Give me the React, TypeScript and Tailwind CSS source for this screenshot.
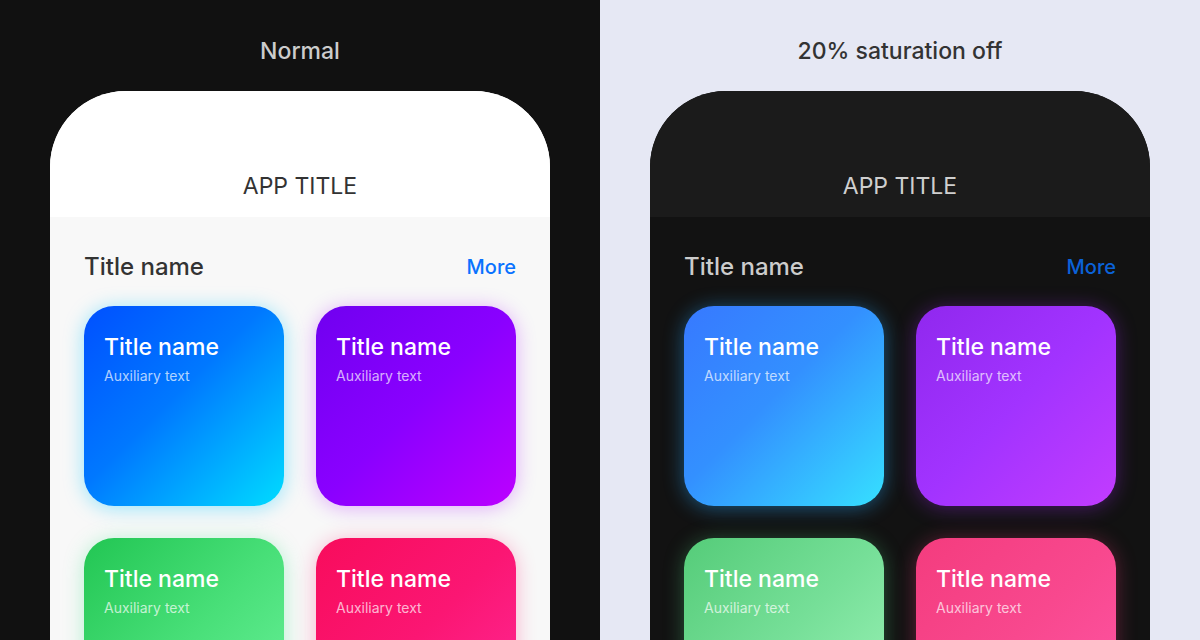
import React from 'react';

type Card = { bg: string; glow: string };

const normalCards: Card[] = [
  { bg: 'bg-[linear-gradient(135deg,#0050ff_0%,#0078ff_45%,#00dcff_100%)]', glow: 'shadow-[0_2px_20px_rgba(0,200,255,0.4)]' },
  { bg: 'bg-[linear-gradient(135deg,#7000f0_0%,#8a00ff_50%,#bc00ff_100%)]', glow: 'shadow-[0_2px_20px_rgba(170,0,255,0.3)]' },
  { bg: 'bg-[linear-gradient(135deg,#22c653_0%,#48df78_50%,#6cf29c_100%)]', glow: 'shadow-[0_2px_20px_rgba(60,230,140,0.35)]' },
  { bg: 'bg-[linear-gradient(135deg,#f80c5c_0%,#fb1673_50%,#ff2a98_100%)]', glow: 'shadow-[0_2px_20px_rgba(255,20,110,0.3)]' },
];

const mutedCards: Card[] = [
  { bg: 'bg-[linear-gradient(135deg,#3779ff_0%,#3390ff_45%,#36e0ff_100%)]', glow: 'shadow-[0_2px_20px_rgba(40,170,255,0.45)]' },
  { bg: 'bg-[linear-gradient(135deg,#9028ee_0%,#a233ff_50%,#c23cff_100%)]', glow: 'shadow-[0_2px_20px_rgba(170,40,255,0.35)]' },
  { bg: 'bg-[linear-gradient(135deg,#55cc79_0%,#76df98_50%,#9ef4b9_100%)]', glow: 'shadow-[0_2px_20px_rgba(80,210,130,0.35)]' },
  { bg: 'bg-[linear-gradient(135deg,#f43c7e_0%,#f8488e_50%,#ff56a6_100%)]', glow: 'shadow-[0_2px_20px_rgba(250,60,130,0.35)]' },
];

function Phone({ dark, cards }: { dark: boolean; cards: Card[] }) {
  return (
    <div className={`w-[500px] flex-1 rounded-t-[76px] overflow-hidden flex flex-col ${dark ? 'bg-[#121212]' : 'bg-[#f8f8f8]'}`}>
      {/* header */}
      <div className={`h-[126px] shrink-0 flex items-end justify-center pb-[17px] ${dark ? 'bg-[#1b1b1b]' : 'bg-white'}`}>
        <span className={`text-[23px] leading-[28px] ${dark ? 'text-[#cfcfcf]' : 'text-[#333333]'}`}>APP TITLE</span>
      </div>

      <div className="px-[34px] pt-[34px]">
        <div className="flex items-center justify-between h-[32px]">
          <span className={`text-[24px] leading-[32px] font-medium ${dark ? 'text-[#cccccc]' : 'text-[#333333]'}`}>Title name</span>
          <span className={`text-[20px] leading-[32px] font-medium ${dark ? 'text-[#0b62d8]' : 'text-[#0a72ff]'}`}>More</span>
        </div>

        <div className="grid grid-cols-2 gap-[32px] mt-[23px]">
          {cards.map((c, i) => (
            <div key={i} className={`h-[200px] rounded-[30px] pl-[20px] pt-[27px] ${c.bg} ${c.glow}`}>
              <div className="text-[23px] leading-[28px] font-medium text-white">Title name</div>
              <div className="mt-[5px] text-[14px] leading-[20px] text-white/70">Auxiliary text</div>
            </div>
          ))}
        </div>
      </div>
    </div>
  );
}

export default function App() {
  return (
    <div className="w-[1200px] h-[640px] overflow-hidden flex" style={{ fontFamily: 'Inter, "Noto Sans", sans-serif' }}>
      <div className="w-[600px] h-full bg-[#111111] flex flex-col items-center pt-[37px]">
        <span className="text-[23px] leading-[28px] font-medium text-[#cccccc]">Normal</span>
        <div className="mt-[26px] flex-1 flex">
          <Phone dark={false} cards={normalCards} />
        </div>
      </div>
      <div className="w-[600px] h-full bg-[#e6e8f4] flex flex-col items-center pt-[37px]">
        <span className="text-[23px] leading-[28px] font-medium text-[#333333]">20% saturation off</span>
        <div className="mt-[26px] flex-1 flex">
          <Phone dark cards={mutedCards} />
        </div>
      </div>
    </div>
  );
}
